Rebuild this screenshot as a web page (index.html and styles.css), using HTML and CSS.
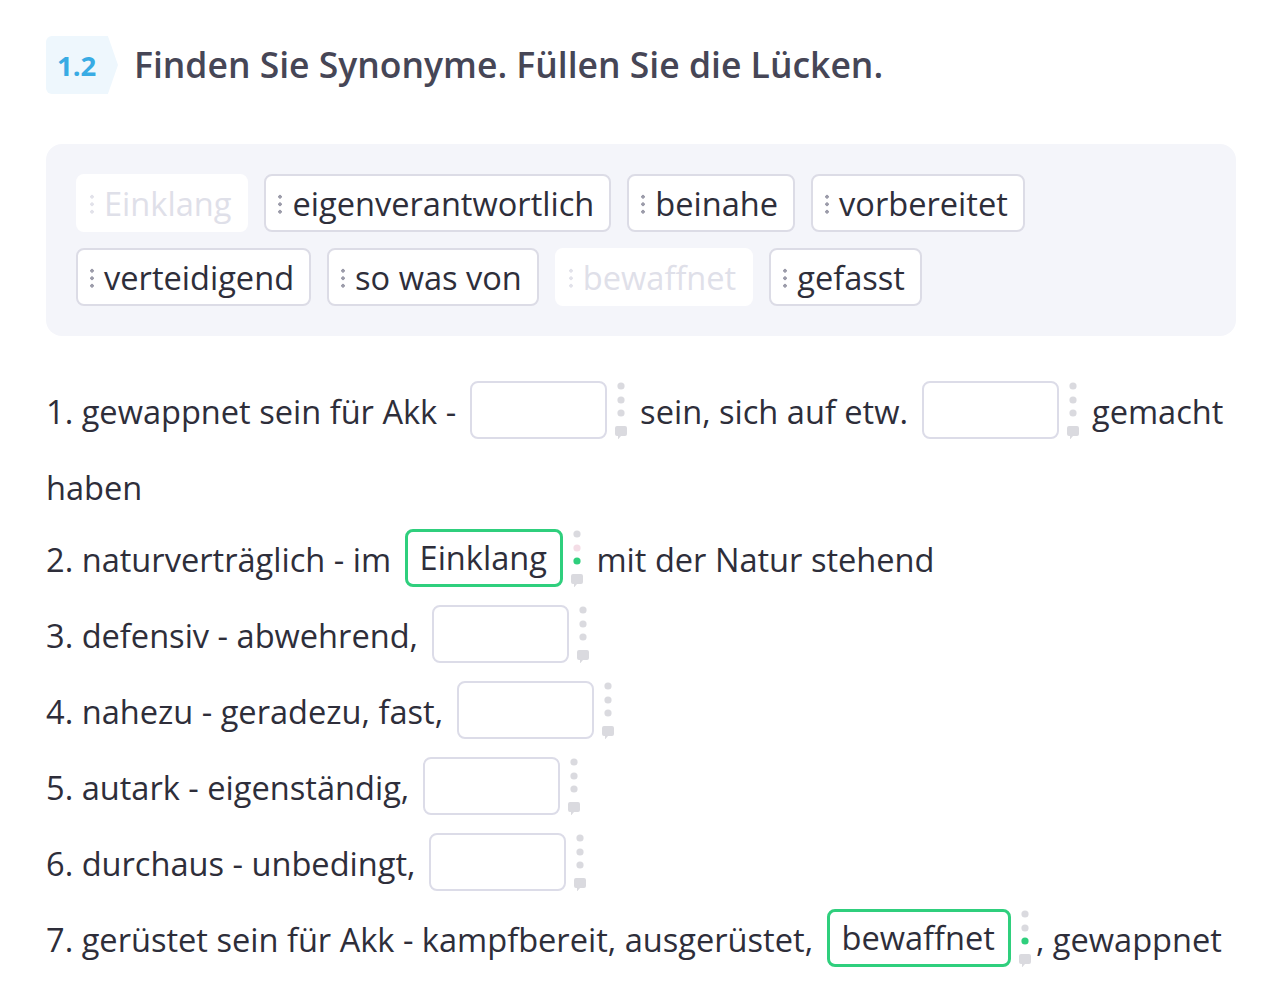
FILE: index.html
```html
<!DOCTYPE html>
<html lang="de">
<head>
    <meta charset="UTF-8">
    <meta name="viewport" content="width=device-width, initial-scale=1.0">
    <title>Finden Sie Synonyme</title>
    <link rel="stylesheet" href="styles.css">
</head>
<body>
    <div id="aufgabe">
        <div class="kopf">
            <span class="nummer">1.2</span>
            <h1>Finden Sie Synonyme. Füllen Sie die Lücken.</h1>
        </div>

        <div class="woerter">
            <span class="wort benutzt"><i class="griff"></i>Einklang</span>
            <span class="wort"><i class="griff"></i>eigenverantwortlich</span>
            <span class="wort"><i class="griff"></i>beinahe</span>
            <span class="wort"><i class="griff"></i>vorbereitet</span>
            <span class="wort"><i class="griff"></i>verteidigend</span>
            <span class="wort"><i class="griff"></i>so was von</span>
            <span class="wort benutzt"><i class="griff"></i>bewaffnet</span>
            <span class="wort"><i class="griff"></i>gefasst</span>
        </div>

        <div class="saetze">
            <p>1. gewappnet sein für Akk - <span class="luecke"><span class="feld"></span><svg class="marke" viewBox="0 0 14 58"><circle cx="7" cy="5" r="3.6"/><circle cx="7" cy="19" r="3.6"/><circle cx="7" cy="32" r="3.6"/><path d="M3 45h8a2 2 0 0 1 2 2v6a2 2 0 0 1-2 2H7l-3 3.5V55H3a2 2 0 0 1-2-2v-6a2 2 0 0 1 2-2z"/></svg></span> sein, sich auf etw. <span class="luecke"><span class="feld"></span><svg class="marke" viewBox="0 0 14 58"><circle cx="7" cy="5" r="3.6"/><circle cx="7" cy="19" r="3.6"/><circle cx="7" cy="32" r="3.6"/><path d="M3 45h8a2 2 0 0 1 2 2v6a2 2 0 0 1-2 2H7l-3 3.5V55H3a2 2 0 0 1-2-2v-6a2 2 0 0 1 2-2z"/></svg></span> gemacht haben</p>
            <p>2. naturverträglich - im <span class="luecke"><span class="feld richtig">Einklang</span><svg class="marke" viewBox="0 0 14 58"><circle cx="7" cy="5" r="3.6"/><circle class="rosa" cx="7" cy="19" r="3.6"/><circle class="gruen" cx="7" cy="32" r="3.6"/><path d="M3 45h8a2 2 0 0 1 2 2v6a2 2 0 0 1-2 2H7l-3 3.5V55H3a2 2 0 0 1-2-2v-6a2 2 0 0 1 2-2z"/></svg></span> mit der Natur stehend</p>
            <p>3. defensiv - abwehrend, <span class="luecke"><span class="feld"></span><svg class="marke" viewBox="0 0 14 58"><circle cx="7" cy="5" r="3.6"/><circle cx="7" cy="19" r="3.6"/><circle cx="7" cy="32" r="3.6"/><path d="M3 45h8a2 2 0 0 1 2 2v6a2 2 0 0 1-2 2H7l-3 3.5V55H3a2 2 0 0 1-2-2v-6a2 2 0 0 1 2-2z"/></svg></span></p>
            <p>4. nahezu - geradezu, fast, <span class="luecke"><span class="feld"></span><svg class="marke" viewBox="0 0 14 58"><circle cx="7" cy="5" r="3.6"/><circle cx="7" cy="19" r="3.6"/><circle cx="7" cy="32" r="3.6"/><path d="M3 45h8a2 2 0 0 1 2 2v6a2 2 0 0 1-2 2H7l-3 3.5V55H3a2 2 0 0 1-2-2v-6a2 2 0 0 1 2-2z"/></svg></span></p>
            <p>5. autark - eigenständig, <span class="luecke"><span class="feld"></span><svg class="marke" viewBox="0 0 14 58"><circle cx="7" cy="5" r="3.6"/><circle cx="7" cy="19" r="3.6"/><circle cx="7" cy="32" r="3.6"/><path d="M3 45h8a2 2 0 0 1 2 2v6a2 2 0 0 1-2 2H7l-3 3.5V55H3a2 2 0 0 1-2-2v-6a2 2 0 0 1 2-2z"/></svg></span></p>
            <p>6. durchaus - unbedingt, <span class="luecke"><span class="feld"></span><svg class="marke" viewBox="0 0 14 58"><circle cx="7" cy="5" r="3.6"/><circle cx="7" cy="19" r="3.6"/><circle cx="7" cy="32" r="3.6"/><path d="M3 45h8a2 2 0 0 1 2 2v6a2 2 0 0 1-2 2H7l-3 3.5V55H3a2 2 0 0 1-2-2v-6a2 2 0 0 1 2-2z"/></svg></span></p>
            <p>7. gerüstet sein für Akk - kampfbereit, ausgerüstet, <span class="luecke"><span class="feld richtig">bewaffnet</span><svg class="marke" viewBox="0 0 14 58"><circle cx="7" cy="5" r="3.6"/><circle cx="7" cy="19" r="3.6"/><circle class="gruen" cx="7" cy="32" r="3.6"/><path d="M3 45h8a2 2 0 0 1 2 2v6a2 2 0 0 1-2 2H7l-3 3.5V55H3a2 2 0 0 1-2-2v-6a2 2 0 0 1 2-2z"/></svg></span>, gewappnet</p>
        </div>
    </div>
</body>
</html>
```

FILE: styles.css
```css
body {
    margin: 0;
    background-color: #ffffff;
    font-family: "Open Sans", "Noto Sans", sans-serif;
    color: #2e2e3a;
}
#aufgabe {
    width: 1190px;
    margin-left: 46px;
    padding-top: 36px;
}
.kopf {
    display: flex;
    align-items: center;
    gap: 16px;
    height: 58px;
}
.nummer {
    display: flex;
    align-items: center;
    width: 61px;
    height: 58px;
    padding-left: 11px;
    background-color: #eef7fd;
    border-radius: 6px 0 0 6px;
    clip-path: polygon(0 0, 86% 0, 100% 50%, 86% 100%, 0 100%);
    color: #38abe4;
    font-size: 27.5px;
    font-weight: 700;
}
h1 {
    margin: 0 0 2px 0;
    font-size: 35.5px;
    font-weight: 600;
    color: #464656;
}
.woerter {
    display: flex;
    flex-wrap: wrap;
    gap: 16px;
    margin-top: 50px;
    padding: 30px;
    background-color: #f4f5fa;
    border-radius: 16px;
}
.wort {
    display: flex;
    align-items: center;
    gap: 10px;
    height: 54px;
    padding: 0 15px 0 12px;
    background-color: #ffffff;
    border: 2px solid #dcdce6;
    border-radius: 8px;
    font-size: 32.6px;
    color: #2e2e3a;
}
.griff {
    width: 4px;
    height: 22px;
    margin-top: 2px;
    background: radial-gradient(circle, #9c9caa 1.6px, transparent 1.8px) 0 0 / 4px 7.5px repeat-y;
}
.wort.benutzt {
    border-color: #ffffff;
    color: #dfe0e9;
}
.wort.benutzt .griff {
    background: radial-gradient(circle, #e2e2ea 1.6px, transparent 1.8px) 0 0 / 4px 7.5px repeat-y;
}
.saetze {
    margin-top: 38px;
}
.saetze p {
    margin: 0;
    font-size: 32.6px;
    line-height: 76px;
}
.saetze p:first-child {
    margin-bottom: -4px;
}
.luecke {
    display: inline-flex;
    align-items: center;
    gap: 7px;
    margin: 0 4px 0 5px;
    vertical-align: middle;
    position: relative;
    top: -5px;
}
.feld {
    box-sizing: border-box;
    display: inline-flex;
    align-items: center;
    min-width: 137px;
    height: 58px;
    padding: 0 12px;
    border: 2px solid #dcdce8;
    border-radius: 8px;
    line-height: 1;
}
.feld.richtig {
    border: 3px solid #2fcf7d;
    min-width: 0;
    padding: 0 13px 0 12px;
}
.marke {
    width: 14px;
    height: 58px;
    fill: #dadadf;
}
.marke .rosa {
    fill: #f4dde6;
}
.marke .gruen {
    fill: #2fcf7d;
}
```
